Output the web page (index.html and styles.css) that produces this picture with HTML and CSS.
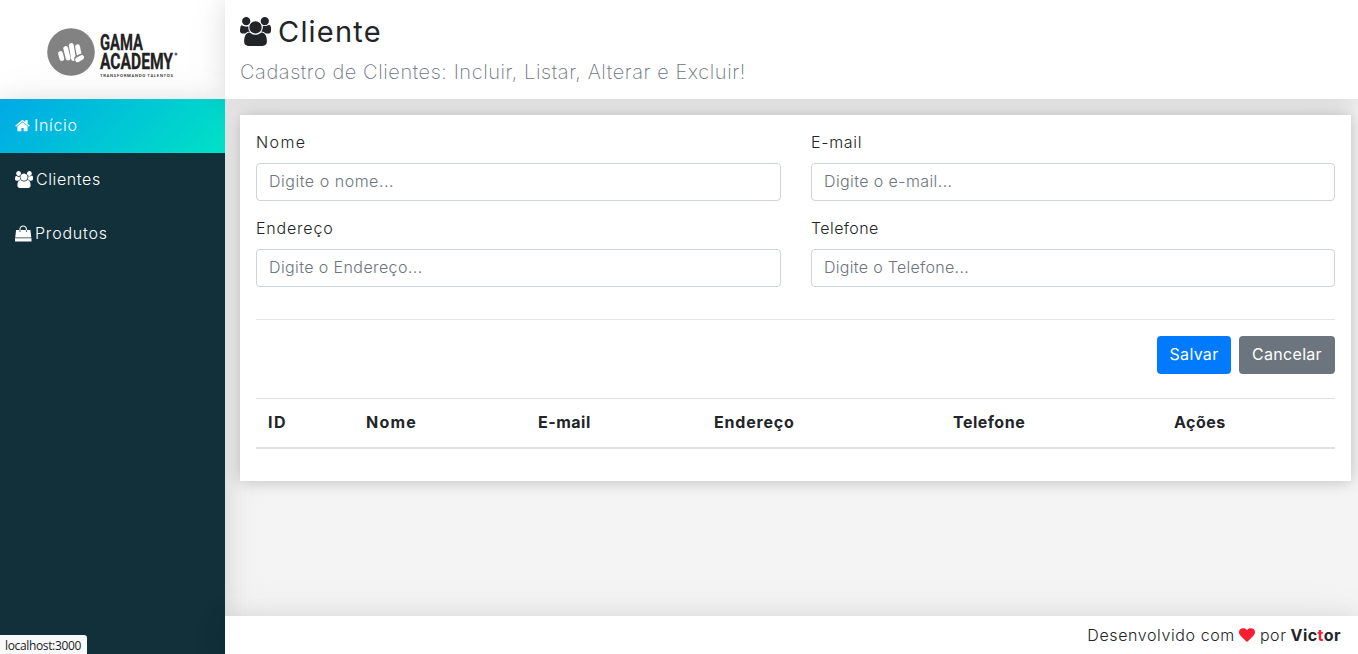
FILE: index.html
```html
<!DOCTYPE html>
<html lang="pt-BR">
<head>
<meta charset="utf-8">
<title>Cadastro de Clientes</title>
<link rel="stylesheet" href="styles.css">
</head>
<body>
<svg class="sprite" aria-hidden="true">
  <symbol id="users" viewBox="0 0 1920 1792"><path d="M593 896q-162 5-265 128h-134q-82 0-138-40.5t-56-118.5q0-353 124-353 6 0 43.5 21t97.500 42.500 119 21.500q67 0 133-23-5 37-5 66 0 159 93 293zm1071 637q0 120-73 189.500t-194 69.500h-874q-121 0-194-69.500t-73-189.500q0-53 3.500-103.500t14-109 26.500-108.500 43-97.500 62-81 85.500-53.500 111.500-20q10 0 43 21.500t73 48 107 48 135 21.500 135-21.500 107-48 73-48 43-21.500q61 0 111.500 20t85.500 53.500 62 81 43 97.500 26.500 108.500 14 109 3.500 103.500zm-1024-1277q0 106-75 181t-181 75-181-75-75-181 75-181 181-75 181 75 75 181zm704 384q0 159-112.500 271.500t-271.500 112.500-271.500-112.500-112.500-271.500 112.500-271.500 271.500-112.500 271.500 112.500 112.500 271.500zm576 225q0 78-56 118.500t-138 40.500h-134q-103-123-265-128 93-134 93-293 0-29-5-66 66 23 133 23 59 0 119-21.500t97.500-42.500 43.500-21q124 0 124 353zm-128-609q0 106-75 181t-181 75-181-75-75-181 75-181 181-75 181 75 75 181z"/></symbol>
</svg>
<div class="app">
  <aside class="logo">
    <svg width="170" height="56" viewBox="0 0 170 56" role="img" aria-label="Gama Academy">
      <circle cx="24" cy="24" r="23.800" fill="#828282"/>
      <g stroke="#fff" stroke-width="4.800" stroke-linecap="round">
        <path d="M13.500 25.500l1.300 5M18.700 20.500l2.400 9.500M24.300 17.500l2.200 13M30.600 18.800l1.500 7.500"/>
        <path d="M31 31.200l3.500-1.800" stroke="#828282" stroke-width="7.500"/>
        <path d="M30.500 31.800l4.200-2.300"/>
      </g>
      <g class="logo-text">
        <text x="53" y="22.300" font-size="22" textLength="43" lengthAdjust="spacingAndGlyphs">GAMA</text>
        <text x="53" y="41.200" font-size="22" textLength="73" lengthAdjust="spacingAndGlyphs">ACADEMY</text>
        <text class="tagline" x="53" y="48.700" font-size="4.300" textLength="73" lengthAdjust="spacing">TRANSFORMANDO TALENTOS</text>
      </g>
      <circle cx="129" cy="26" r="1.500" fill="#666"/>
    </svg>
  </aside>
  <nav class="menu">
    <a class="item active"><svg width="15" height="15" viewBox="50 80 1692 1600"><path d="M1472 992v480q0 26-19 45t-45 19h-384v-384h-256v384h-384q-26 0-45-19t-19-45v-480q0-1 .5-3t.5-3l575-474 575 474q1 2 1 6zm223-69l-62 74q-8 9-21 11h-3q-13 0-21-7l-692-577-692 577q-12 8-24 7-13-2-21-11l-62-74q-8-10-7-23.500t11-21.500l719-599q32-26 76-26t76 26l244 204v-195q0-14 9-23t23-9h192q14 0 23 9t9 23v408l219 182q10 8 11 21.500t-7 23.500z"/></svg><span class="t-inicio">Início</span></a>
    <a class="item"><svg width="18" height="17"><use href="#users"/></svg><span class="t-clientes">Clientes</span></a>
    <a class="item"><svg width="17" height="17" viewBox="0 0 17 17"><path d="M1.100 5h14.300l.9 7.600H.2zM0 13.300h16.500V16.500H0z"/><path d="M5 7V4.200a3.200 3.200 0 0 1 6.400 0V7" fill="none" stroke="#fff" stroke-width="1.100"/><path d="M5 5.300v1.500M11.400 5.300v1.500" stroke="#11303a"/></svg><span class="t-produtos">Produtos</span></a>
  </nav>
  <header class="header">
    <h1><svg width="31" height="29" viewBox="0 0 1920 1792"><use href="#users"/></svg><span>Cliente</span></h1>
    <p>Cadastro de Clientes: Incluir, Listar, Alterar e Excluir!</p>
  </header>
  <main class="content">
    <div class="card">
      <form class="form">
        <label class="field"><span class="l-nome">Nome</span><input class="p-nome" placeholder="Digite o nome..."></label>
        <label class="field"><span class="l-email">E-mail</span><input class="p-email" placeholder="Digite o e-mail..."></label>
        <label class="field"><span class="l-end">Endereço</span><input class="p-end" placeholder="Digite o Endereço..."></label>
        <label class="field"><span class="l-tel">Telefone</span><input class="p-tel" placeholder="Digite o Telefone..."></label>
      </form>
      <hr>
      <div class="actions"><button class="save">Salvar</button><button class="cancel">Cancelar</button></div>
      <table>
        <colgroup><col class="c1"><col class="c2"><col class="c3"><col class="c4"><col class="c5"><col class="c6"></colgroup>
        <thead><tr><th class="h-id">ID</th><th class="h-nome">Nome</th><th>E-mail</th><th class="h-end">Endereço</th><th>Telefone</th><th>Ações</th></tr></thead>
      </table>
    </div>
  </main>
  <footer class="footer"><span class="dev">Desenvolvido com</span><svg width="16" height="14" viewBox="0 128 1792 1536"><path d="M896 1664q-26 0-44-18l-624-602q-10-8-27.500-26t-55.500-65.500-68-97.500-53.500-121-23.500-138q0-220 127-344t351-124q62 0 126.500 21.500t120 58 95.500 68.500 76 68q36-36 76-68t95.500-68.500 120-58 126.500-21.500q224 0 351 124t127 344q0 221-229 450l-623 600q-18 18-44 18z"/></svg><span class="por">por</span><strong>Vic<i>t</i>or</strong></footer>
</div>
<div class="status">localhost:3000</div>
</body>
</html>
```
FILE: styles.css
```css
* { box-sizing: border-box; }
body { margin: 0; font: 300 16px/24px Inter, sans-serif; color: #212529; overflow: hidden; }
.sprite { position: absolute; width: 0; height: 0; }
.app {
  --shadow: 0 2px 23px 0 rgba(0,0,0,.1), 0 2px 49px 0 rgba(0,0,0,.06);
  display: grid; height: 654px;
  grid-template: 99px 1fr 38px / 225px 1fr;
  grid-template-areas: "logo header" "menu content" "menu footer";
  background: #f4f4f4;
}
.logo { grid-area: logo; background: #fff; display: flex; padding: 28px 0 0 47px; }
.logo-text { font-family: Roboto, sans-serif; font-weight: 700; fill: #222; stroke: #222; stroke-width: .3px; }
.tagline { stroke: none; font-weight: 500; }
.menu { grid-area: menu; background: #11303a; box-shadow: var(--shadow); }
.item { display: flex; align-items: center; height: 54px; padding: 0 15px 2px; color: #fff; }
.item svg { fill: #fff; flex: none; }
.item span { margin-left: 4px; padding-bottom: 1px; }
.t-inicio { letter-spacing: .7px; }
.item .t-clientes { letter-spacing: .6px; margin-left: 3px; }
.item .t-produtos { letter-spacing: .8px; margin-left: 3px; }
.active { background: linear-gradient(135deg, #00a9e6, #00e1c6); }
.header { grid-area: header; background: #fff; padding: 14px 15px; box-shadow: var(--shadow); }
.header h1 { display: flex; align-items: center; margin: 0; height: 34px; font-size: 29px; font-weight: 400; letter-spacing: 1.2px; }
.header h1 svg { fill: #212529; }
.header h1 span { margin-left: 7px; padding-top: 1px; }
.header p { margin: 9px 0 0; line-height: 30px; font-size: 20px; font-weight: 200; color: #6c757d; letter-spacing: .58px; white-space: nowrap; }
.content { grid-area: content; padding: 16px 7px 0 15px; }
.card { height: 366px; padding: 16px; background: #fff; box-shadow: 0 0 15px rgba(0,0,0,.24); }
.form { display: grid; grid-template-columns: 525px 524px; column-gap: 30px; row-gap: 16px; }
.field span { display: block; height: 24px; line-height: 23px; margin-bottom: 8px; }
.l-nome { letter-spacing: 1.4px; }
.l-email { letter-spacing: .7px; }
.l-end { letter-spacing: .8px; }
.l-tel { letter-spacing: .4px; }
input { display: block; width: 100%; height: 38px; padding: 4px 12px 6px; border: 1px solid #ced4da; border-radius: 4px; font: inherit; background: #fff; letter-spacing: .4px; }
.p-nome { letter-spacing: .52px; }
.p-tel { letter-spacing: .3px; }
input::placeholder { color: #6c757d; opacity: 1; }
hr { margin: 32px 0 16px; border: 0; border-top: 1px solid #e5e5e5; }
.actions { display: flex; justify-content: flex-end; gap: 8px; margin-bottom: 24px; }
button { height: 38px; border: 0; border-radius: 4px; padding: 0 0 2px; color: #fff; font: inherit; font-weight: 400; letter-spacing: .3px; }
.save { width: 74px; background: #007bff; }
.cancel { width: 96px; background: #6c757d; }
table { width: 1079px; table-layout: fixed; border-collapse: separate; border-spacing: 0; }
th { padding: 11px 12px 13px; height: 51px; line-height: 24px; text-align: left; font-weight: 650; border-top: 1px solid #dee2e6; border-bottom: 2px solid #dee2e6; letter-spacing: .5px; }
.h-id { letter-spacing: 1.6px; }
.h-nome { letter-spacing: 1.2px; }
.h-end { letter-spacing: .8px; }
.c1 { width: 98px; } .c2 { width: 172px; } .c3 { width: 176px; }
.c4 { width: 239px; } .c5 { width: 221px; } .c6 { width: 173px; }
.footer { grid-area: footer; display: flex; align-items: center; justify-content: flex-end; padding: 0 17px 1px 0; background: #fff; box-shadow: var(--shadow); }
.footer svg { fill: #fa1e32; margin: 0 5px 0 4px; }
.footer strong { margin-left: 4px; font-weight: 700; letter-spacing: .45px; }
.footer i { font-style: normal; color: #fa1e32; }
.dev, .por { letter-spacing: .6px; }
.status { position: absolute; left: 0; bottom: 0; width: 87px; height: 19px; padding-left: 5px; background: #f8f9fa; border-top-right-radius: 3px; font: 12px/21px "Open Sans", sans-serif; letter-spacing: -.35px; color: #222; }
```
